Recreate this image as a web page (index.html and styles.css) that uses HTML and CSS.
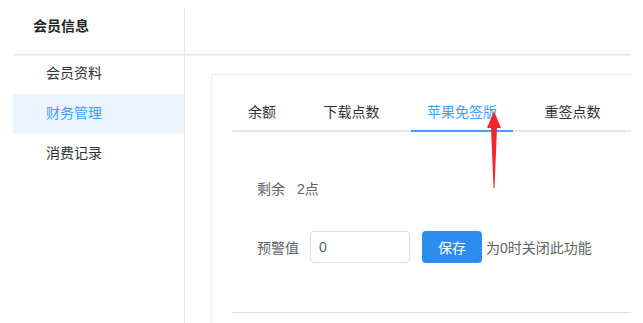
FILE: index.html
```html
<!DOCTYPE html>
<html lang="zh-CN">
<head>
<meta charset="utf-8">
<title>会员信息</title>
<link rel="stylesheet" href="styles.css">
</head>
<body>
<div class="app">
  <aside class="sidebar">
    <div class="side-head">会员信息</div>
    <ul class="menu">
      <li class="menu-item">会员资料</li>
      <li class="menu-item active">财务管理</li>
      <li class="menu-item">消费记录</li>
    </ul>
  </aside>
  <main class="main">
    <div class="main-head"></div>
    <section class="card">
      <div class="tabs">
        <div class="tab">余额</div>
        <div class="tab">下载点数</div>
        <div class="tab active">苹果免签版</div>
        <div class="tab">重签点数</div>
      </div>
      <div class="tab-body">
        <div class="row remain"><span class="label">剩余</span><span class="value">2点</span></div>
        <div class="row warn">
          <span class="label">预警值</span>
          <input class="input" type="text" value="0">
          <button class="btn">保存</button>
          <span class="hint">为0时关闭此功能</span>
        </div>
      </div>
      <div class="divider"></div>
    </section>
    <svg class="arrow" width="20" height="80" viewBox="0 0 20 80">
      <path d="M10 0 L17 17 L13 17 L10.5 77 L9.5 77 L7 17 L3 17 Z" fill="#f4262d"/>
    </svg>
  </main>
</div>
</body>
</html>
```

FILE: styles.css
```css
* { box-sizing: border-box; }
html, body { margin: 0; padding: 0; background: #fff; }
body {
  font-family: "Liberation Sans", "Noto Sans CJK SC", sans-serif;
  font-size: 14px;
  color: #303133;
  overflow: hidden;
}
.app {
  display: flex;
  margin: 8px 0 0 13px;
  width: 618px;
  height: 315px;
}
.sidebar {
  width: 172px;
  flex: none;
  border-right: 1px solid #e6e6e6;
}
.side-head {
  position: relative;
  height: 46px;
  padding-left: 20px;
  line-height: 37px;
  font-weight: bold;
  color: #222;
  box-shadow: 0 1px 0 #e9e9e9, 0 2px 0 #f2f2f2;
}
.menu { list-style: none; margin: 0; padding: 0; }
.menu-item {
  height: 40px;
  line-height: 39px;
  padding-left: 33px;
  color: #303133;
}
.menu-item.active {
  background: #ecf5ff;
  color: #409eff;
}
.main {
  flex: 1;
  position: relative;
  overflow: hidden;
}
.main-head {
  position: relative;
  height: 46px;
  box-shadow: 0 1px 0 #e9e9e9, 0 2px 0 #f2f2f2;
}
.card {
  margin: 20px 0 0 26px;
  width: 600px;
  height: 300px;
  border: 1px solid #ebeef5;
  padding: 17px 20px 0 20px;
}
.tabs {
  display: flex;
  gap: 15.5px;
  border-bottom: 2px solid #e4e7ed;
  height: 40px;
}
.tab {
  height: 40px;
  line-height: 40px;
  padding: 0 16px;
  color: #303133;
  border-bottom: 2px solid transparent;
}
.tab.active {
  color: #409eff;
  border-bottom-color: #409eff;
}
.tab-body {
  padding: 40px 0 0 25px;
  color: #606266;
}
.row { display: flex; align-items: center; height: 32px; }
.remain .label { margin-right: 12px; }
.warn { margin-top: 27px; }
.warn .label { margin-right: 11px; }
.input {
  width: 100px;
  height: 32px;
  border: 1px solid #dcdfe6;
  border-radius: 4px;
  padding: 0 8px;
  font: inherit;
  color: #606266;
  outline: none;
}
.btn {
  margin-left: 12px;
  width: 60px;
  height: 32px;
  border: none;
  border-radius: 4px;
  background: #2d8cf0;
  color: #fff;
  font: inherit;
  padding: 0;
}
.hint { margin-left: 4px; }
.divider {
  margin-top: 49px;
  border-top: 1px solid #dcdfe6;
}
.arrow {
  position: absolute;
  left: 299px;
  top: 103px;
}
```
